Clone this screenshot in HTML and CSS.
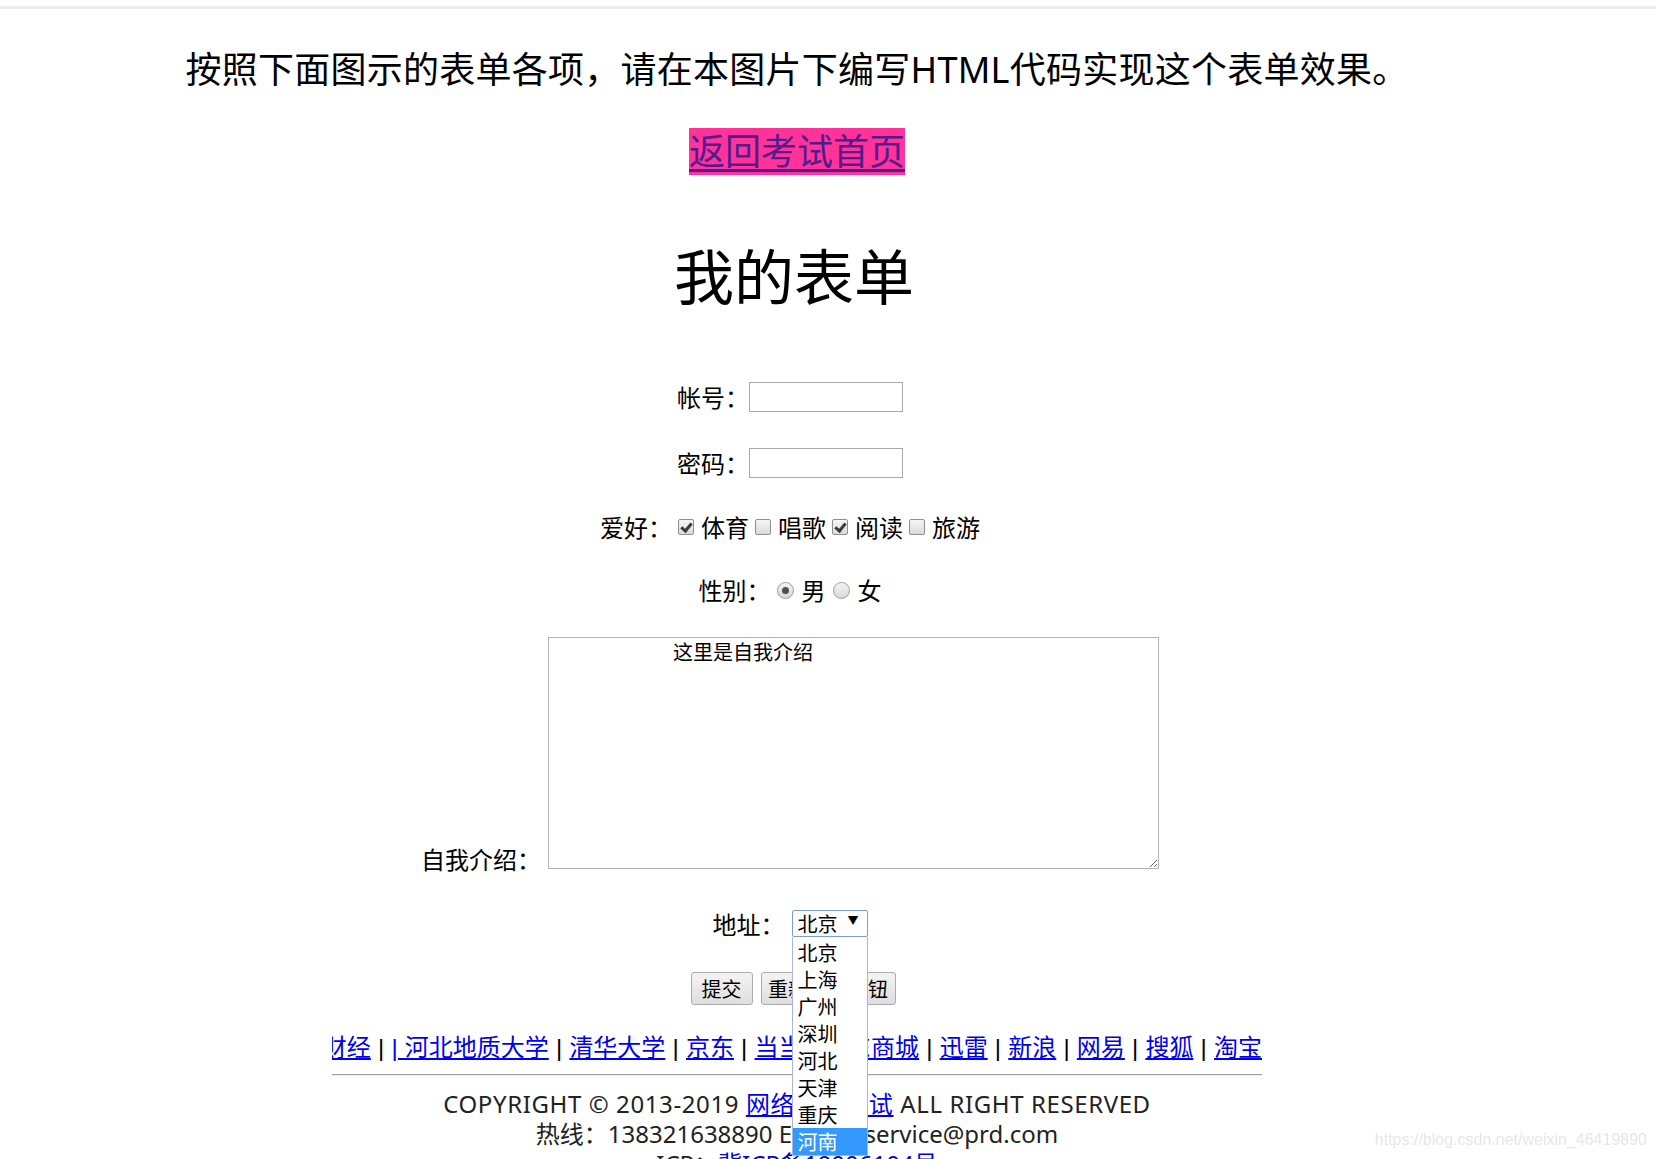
FILE: index.html
```html
<!DOCTYPE html>
<html lang="zh-CN">
<head>
<meta charset="utf-8">
<title>我的表单</title>
<link rel="stylesheet" href="styles.css">
</head>
<body>
<div class="topbar"></div>
<div class="page">
  <p class="intro">按照下面图示的表单各项，请在本图片下编写HTML代码实现这个表单效果。</p>
  <div class="back"><a href="#" class="back-link">返回考试首页</a></div>
  <h1 class="title">我的表单</h1>

  <form class="form">
    <div class="row row-account">
      <label class="label">帐号：</label>
      <input class="text-input" type="text">
    </div>
    <div class="row row-password">
      <label class="label">密码：</label>
      <input class="text-input" type="password">
    </div>
    <div class="row row-hobby">
      <span class="label">爱好：</span>
      <label class="opt"><input type="checkbox" checked><span>体育</span></label>
      <label class="opt"><input type="checkbox"><span>唱歌</span></label>
      <label class="opt"><input type="checkbox" checked><span>阅读</span></label>
      <label class="opt"><input type="checkbox"><span>旅游</span></label>
    </div>
    <div class="row row-gender">
      <span class="label">性别：</span>
      <label class="opt"><input type="radio" name="sex" checked><span>男</span></label>
      <label class="opt"><input type="radio" name="sex"><span>女</span></label>
    </div>
    <div class="row row-intro">
      <label class="label label-intro">自我介绍：</label>
      <textarea class="intro-area">这里是自我介绍</textarea>
    </div>
    <div class="row row-address">
      <label class="label label-address">地址：</label>
      <div class="select">
        <div class="select-box"><span>北京</span><span class="arrow">▼</span></div>
        <ul class="options">
          <li>北京</li>
          <li>上海</li>
          <li>广州</li>
          <li>深圳</li>
          <li>河北</li>
          <li>天津</li>
          <li>重庆</li>
          <li class="active">河南</li>
        </ul>
      </div>
    </div>
    <div class="row row-buttons">
      <button type="submit" class="btn">提交</button>
      <button type="reset" class="btn btn-wide">重新设置按钮</button>
    </div>
  </form>

  <div class="footer">
    <div class="marquee">
      <div class="marquee-track">
        <a href="#">新浪财经</a> | <a href="#">| 河北地质大学</a> | <a href="#">清华大学</a> | <a href="#">京东</a> | <a href="#">当当</a> | <a href="#">京东商城</a> | <a href="#">迅雷</a> | <a href="#">新浪</a> | <a href="#">网易</a> | <a href="#">搜狐</a> | <a href="#">淘宝</a>
      </div>
    </div>
    <div class="rule"></div>
    <div class="copyright">
      <p class="caps">COPYRIGHT © 2013-2019 <a href="#">网络在线考试</a> ALL RIGHT RESERVED</p>
      <p>热线：138321638890 Email：service@prd.com</p>
      <p>ICP：<a href="#">冀ICP备19006104号</a></p>
    </div>
  </div>
</div>
<div class="watermark">https://blog.csdn.net/weixin_46419890</div>
</body>
</html>
```

FILE: styles.css
```css
html, body {
  margin: 0;
  padding: 0;
  background: #fff;
}

body {
  font-family: "Noto Sans", "Noto Sans CJK SC", sans-serif;
  color: #000;
  overflow: hidden;
}

.topbar {
  margin-top: 6px;
  height: 3px;
  background: #ececec;
}

.page {
  width: 1594px;
}

.intro {
  margin: 39px 0 0;
  font-size: 36px;
  line-height: 44px;
  letter-spacing: 0.25px;
  text-align: center;
}

.back {
  margin-top: 36px;
  height: 47px;
  text-align: center;
}

.back-link {
  display: inline-block;
  height: 47px;
  line-height: 47px;
  font-size: 36px;
  background: #ff3399;
  color: #551a8b;
  text-decoration: underline;
  text-underline-offset: 4px;
}

.title {
  margin: 66px 0 0;
  padding-right: 6px;
  font-size: 60px;
  line-height: 72px;
  font-weight: normal;
  text-align: center;
}

.form {
  padding-right: 14px;
  font-family: "Noto Sans CJK SC", sans-serif;
}

.row {
  display: flex;
  justify-content: center;
  align-items: center;
}

.label {
  font-size: 24px;
  line-height: 30px;
  white-space: nowrap;
}

.row-account { margin-top: 69px; }
.row-password { margin-top: 36px; }
.row-hobby { margin-top: 34px; height: 30px; }
.row-gender { margin-top: 33px; height: 30px; }
.row-intro { margin-top: 32px; align-items: flex-end; }
.row-address { margin-top: 39px; }
.row-buttons { margin-top: 35px; margin-left: 6px; gap: 8px; }

.text-input {
  box-sizing: border-box;
  width: 154px;
  height: 30px;
  margin: 0;
  border: 1px solid #a9a9a9;
  padding: 2px 4px;
  font-size: 20px;
  background: #fff;
  outline: none;
}

.opt {
  display: inline-flex;
  align-items: center;
  font-size: 24px;
  line-height: 30px;
}

.row-hobby .opt { margin-left: 6px; }
.row-hobby .label + .opt { margin-left: 6px; }
.row-hobby .opt input { margin-right: 7px; }

.row-gender .opt { margin-left: 7px; }
.row-gender .label + .opt { margin-left: 6px; }
.row-gender .opt input { margin-right: 8px; }

input[type="checkbox"] {
  appearance: none;
  -webkit-appearance: none;
  position: relative;
  box-sizing: border-box;
  width: 16px;
  height: 16px;
  margin: 0;
  border: 1px solid #8f8f8f;
  border-radius: 2px;
  background: linear-gradient(#f6f6f6, #dadada);
}

input[type="checkbox"]:checked::after {
  content: "";
  position: absolute;
  left: 4px;
  top: 1px;
  width: 4px;
  height: 8px;
  border: solid #3a3a3a;
  border-width: 0 3px 3px 0;
  transform: rotate(40deg);
}

input[type="radio"] {
  appearance: none;
  -webkit-appearance: none;
  position: relative;
  box-sizing: border-box;
  width: 17px;
  height: 17px;
  margin: 0;
  border: 1px solid #9c9c9c;
  border-radius: 50%;
  background: linear-gradient(#f4f4f4, #d8d8d8);
}

input[type="radio"]:checked::after {
  content: "";
  position: absolute;
  left: 4px;
  top: 4px;
  width: 7px;
  height: 7px;
  border-radius: 50%;
  background: #505050;
}

.label-intro {
  margin-right: 7px;
  line-height: 24px;
}

.intro-area {
  box-sizing: border-box;
  width: 611px;
  height: 232px;
  margin: 0 0 2px 0;
  padding: 2px;
  border: 1px solid #b4b4b4;
  font-family: "Noto Sans CJK SC", sans-serif;
  font-size: 20px;
  line-height: 24px;
  text-indent: 122px;
  color: #000;
  resize: both;
  outline: none;
}

.label-address {
  margin-right: 7px;
  line-height: 27px;
}

.select {
  position: relative;
  width: 76px;
}

.select-box {
  box-sizing: border-box;
  height: 27px;
  padding: 0 0 0 5px;
  border: 1px solid #7a9fd8;
  border-radius: 2px;
  display: flex;
  align-items: center;
  justify-content: space-between;
  font-size: 20px;
  line-height: 25px;
  background: #fff;
}

.arrow {
  font-size: 11px;
  margin-right: 8px;
  margin-top: -6px;
}

.options {
  position: absolute;
  top: 100%;
  left: 0;
  z-index: 5;
  box-sizing: border-box;
  width: 76px;
  margin: 0;
  padding: 2px 0 0;
  list-style: none;
  background: #fff;
  border: 1px solid #a7b8d4;
  border-top: none;
  font-size: 20px;
}

.options li {
  height: 27px;
  line-height: 27px;
  padding-left: 5px;
}

.options li.active {
  background: #3399ff;
  color: #fff;
}

.btn {
  box-sizing: border-box;
  height: 33px;
  width: 62px;
  margin: 0;
  padding: 0;
  border: 1px solid #acacac;
  border-radius: 3px;
  background: linear-gradient(#f4f4f4, #dedede);
  font-family: "Noto Sans CJK SC", sans-serif;
  font-size: 20px;
  color: #000;
}

.btn-wide {
  width: 135px;
}

.footer {
  width: 930px;
  margin: 28px auto 0;
  font-size: 24px;
}

.marquee {
  display: flex;
  justify-content: flex-end;
  overflow: hidden;
  white-space: nowrap;
  line-height: 30px;
  height: 30px;
  word-spacing: 0.5px;
  font-family: "Liberation Sans", "Noto Sans CJK SC", sans-serif;
}

.marquee-track {
  flex: none;
}

.marquee a,
.copyright a {
  color: #0000ee;
  text-decoration: underline;
}

.rule {
  margin-top: 11px;
  border-top: 1px solid #a0a0a0;
  border-bottom: 1px solid #ececec;
}

.copyright {
  margin-top: 13px;
  color: #222;
  text-align: center;
  line-height: 30px;
}

.copyright p {
  margin: 0;
}

.copyright .caps {
  letter-spacing: 0.6px;
}

.watermark {
  position: fixed;
  right: 9px;
  bottom: 10px;
  font-family: "Liberation Sans", Arial, sans-serif;
  font-size: 16px;
  color: #e6e6e6;
}
```
